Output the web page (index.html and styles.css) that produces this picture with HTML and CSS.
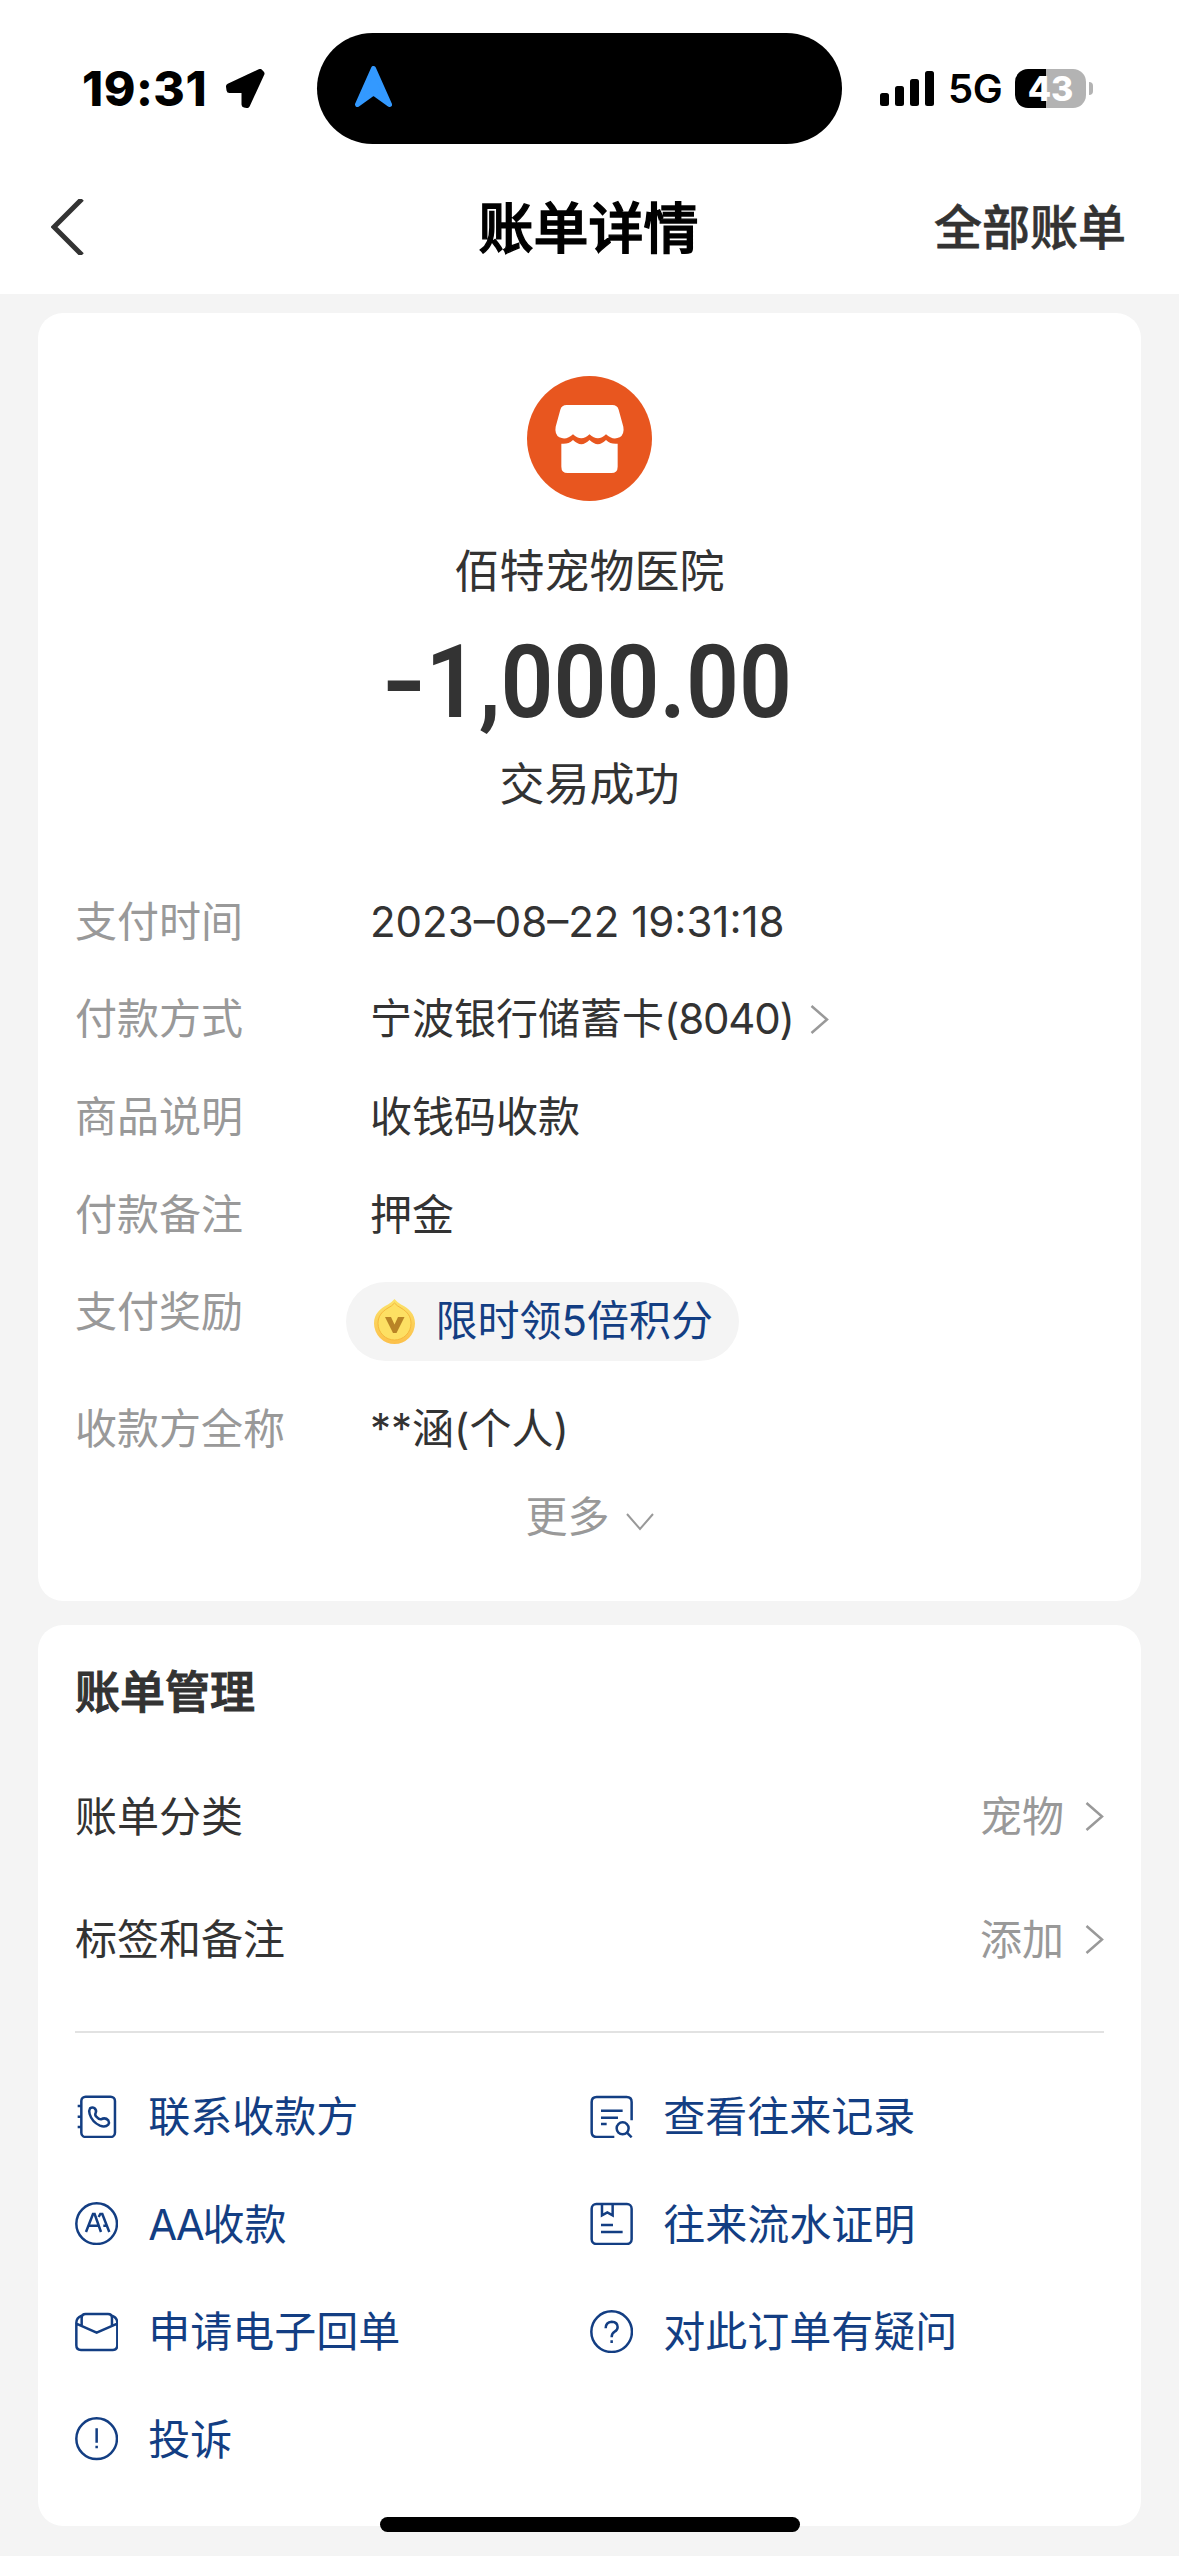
FILE: index.html
```html
<!DOCTYPE html>
<html lang="zh-CN">
<head>
<meta charset="utf-8">
<title>账单详情</title>
<link rel="stylesheet" href="styles.css">
</head>
<body>
<div class="status-bar">
  <div class="status-left">
    <span class="clock">19:31</span>
    <svg class="location" viewBox="0 0 39 39"><path d="M3 17.500 34 3 35.500 4.500 21 36 18.500 35.500V21H3.500Z" fill="#000" stroke="#000" stroke-width="6" stroke-linejoin="round"/></svg>
  </div>
  <div class="island">
    <svg class="nav-arrow" viewBox="0 0 37 41"><path d="M18.500 2.500 34.500 38.500 18.500 27 2.500 38.500Z" fill="#3399ff" stroke="#3399ff" stroke-width="5" stroke-linejoin="round"/></svg>
  </div>
  <div class="status-right">
    <svg class="signal" viewBox="0 0 54 35"><rect x="0" y="22" width="9" height="13" rx="2.500"/><rect x="15" y="15" width="9" height="20" rx="2.500"/><rect x="30" y="8" width="9" height="27" rx="2.500"/><rect x="45" y="0" width="9" height="35" rx="2.500"/></svg>
    <span class="network">5G</span>
    <div class="battery">43</div>
    <span class="battery-cap"></span>
  </div>
</div>

<header class="nav">
  <svg class="back" viewBox="0 0 33 56"><path d="M31 0 3 28 31 56" fill="none" stroke="#333" stroke-width="5"/></svg>
  <h1 class="nav-title">账单详情</h1>
  <a class="nav-link">全部账单</a>
</header>

<main class="content">
  <section class="card summary">
    <svg class="shop" viewBox="501 78 375 375">
      <circle cx="688.500" cy="265.500" r="187.500" fill="#e8561f"/>
      <path d="M620 165H757Q772 165 776 179L790 230Q794 252 779 262Q758 272 738 253Q714 277 688.500 253Q664 277 639 253Q619 272 598 262Q583 252 587 230L601 179Q605 165 620 165Z" fill="#fff"/>
      <path d="M604 281Q624 284 639 270Q664 295 688.500 270Q714 295 738 270Q753 284 773 281V350Q773 369 754 369H623Q604 369 604 350Z" fill="#fff"/>
    </svg>
    <p class="payee">佰特宠物医院</p>
    <p class="amount"><span class="sign">-</span>1,000.00</p>
    <p class="state">交易成功</p>

    <dl class="details">
      <div class="row"><dt>支付时间</dt><dd>2023–08–22 19:31:18</dd></div>
      <div class="row"><dt>付款方式</dt><dd>宁波银行储蓄卡<span class="card-tail">(8040)</span><svg class="chevron after-text" viewBox="0 0 19 29"><path d="M1.500 1 17 14.500 1.500 28"/></svg></dd></div>
      <div class="row"><dt>商品说明</dt><dd>收钱码收款</dd></div>
      <div class="row"><dt>付款备注</dt><dd>押金</dd></div>
      <div class="row reward-row"><dt>支付奖励</dt><dd class="reward">
        <svg class="coin" viewBox="0 0 41 45">
          <defs><linearGradient id="gold" x1="0" y1="0" x2="0" y2="1"><stop offset="0" stop-color="#fbe36a"/><stop offset="1" stop-color="#fcc04a"/></linearGradient></defs>
          <path d="M20.500 0Q23 3 27 5.500C35 9.500 41 15 41 24.500A20.500 20.500 0 0 1 0 24.500C0 15 6 9.500 14 5.500Q18 3 20.500 0Z" fill="url(#gold)"/>
          <path d="M20.500 4Q23 7 27 9C34 13 37 18 37 24.500A16.500 16.500 0 0 1 4 24.500C4 18 7 13 14 9Q18 7 20.500 4Z" fill="#fde063" stroke="#f5b83c" stroke-width="1"/>
          <path d="M11 18H17L20.500 25.500 24 18H30.500L22.500 34H19Z" fill="#b98426"/>
        </svg>限时领5倍积分</dd></div>
      <div class="row"><dt>收款方全称</dt><dd>**涵(个人)</dd></div>
    </dl>
    <div class="more">更多<svg class="chevron-down" viewBox="0 0 28 18"><path d="M1 1 14 16 27 1"/></svg></div>
  </section>

  <section class="card manage">
    <h2 class="manage-title">账单管理</h2>
    <div class="setting"><span>账单分类</span><span class="setting-value">宠物<svg class="chevron" viewBox="0 0 19 29"><path d="M1.500 1 17 14.500 1.500 28"/></svg></span></div>
    <div class="setting"><span>标签和备注</span><span class="setting-value">添加<svg class="chevron" viewBox="0 0 19 29"><path d="M1.500 1 17 14.500 1.500 28"/></svg></span></div>
    <hr class="divider">
    <nav class="actions">
      <a class="action"><svg class="icon" viewBox="46 75 130 130"><rect x="65" y="80" width="101" height="121" rx="13"/><path d="M54 108H65M54 140H65M54 171H65"/><path d="M91 115Q98 110 104 114Q112 121 108 129Q105 135 110 140Q118 149 124 148Q137 141 146 151Q150 158 146 164Q137 173 121 167Q97 156 90 132Q87 121 91 115Z"/></svg><span>联系收款方</span></a>
      <a class="action"><svg class="icon" viewBox="61 75 130 130"><path d="M186 151V96Q186 81 171 81H81Q66 81 66 96V186Q66 201 81 201H134M94 122H159M94 143H145M94 162H111"/><circle cx="159" cy="175" r="18"/><path d="M172 188 186 202"/></svg><span>查看往来记录</span></a>
      <a class="action"><svg class="icon" viewBox="46 399 130 130"><circle cx="111" cy="464" r="61"/><path d="M79 489 100 435H105L124 489M87 470H117M117 444 122 435H128L149 489M131 470H141"/></svg><span><span class="latin">AA</span>收款</span></a>
      <a class="action"><svg class="icon" viewBox="61 399 130 130"><rect x="66" y="405" width="120" height="120" rx="14"/><path d="M97 405V439L113 430 129 439V405M94 468H130M94 489H159"/></svg><span>往来流水证明</span></a>
      <a class="action"><svg class="icon" viewBox="46 723 130 130"><path d="M66 768V747Q66 735 78 735H145Q157 735 157 747V768M66 740Q50 746 50 762V829Q50 843 64 843H159Q173 843 173 829V762Q173 746 157 740M50 764 111 791 173 764"/></svg><span>申请电子回单</span></a>
      <a class="action"><svg class="icon" viewBox="61 723 130 130"><circle cx="126" cy="788" r="61"/><path d="M108 778Q108 759 126 758Q144 759 144 774Q144 783 135 788Q126 793 126 805M126 814V822"/></svg><span>对此订单有疑问</span></a>
      <a class="action"><svg class="icon" viewBox="46 1045 130 130"><circle cx="111" cy="1110" r="61"/><path d="M111 1079V1122M111 1131V1139"/></svg><span>投诉</span></a>
    </nav>
  </section>
</main>
<div class="home-indicator"></div>
</body>
</html>
```
FILE: styles.css
```css
* { box-sizing: border-box; margin: 0; padding: 0; }

body {
  width: 1179px;
  height: 2556px;
  overflow: hidden;
  background: #f4f4f4;
  color: #333;
  font-family: Inter, "Noto Sans CJK SC", sans-serif;
  font-size: 42px;
  line-height: 60px;
}

svg { display: block; flex: none; }

.status-bar {
  display: grid;
  grid-template-columns: 317px 525px 337px;
  height: 177px;
  padding-top: 33px;
  background: #fff;
  color: #000;
}

.status-left,
.status-right { display: flex; align-items: center; height: 111px; }

.status-left { padding-left: 82px; }
.clock { width: 144px; font-size: 48px; font-weight: 800; letter-spacing: 0.500px; }
.location { width: 39px; height: 39px; }

.island {
  display: flex;
  align-items: center;
  height: 111px;
  padding: 0 0 4px 38px;
  border-radius: 56px;
  background: #000;
}
.nav-arrow { width: 37px; height: 41px; }

.status-right { padding-left: 38px; }
.signal { width: 54px; height: 35px; }
.network { width: 67px; margin-left: 14px; padding-top: 1px; font-size: 40px; font-weight: 600; white-space: nowrap; letter-spacing: -0.500px; }
.battery {
  width: 71px;
  height: 39px;
  border-radius: 13px;
  background: linear-gradient(90deg, #000 43%, #b3b3b3 43%);
  color: #fff;
  font-size: 34px;
  font-weight: 800;
  line-height: 39px;
  text-align: center;
}
.battery-cap { width: 4px; height: 13px; margin-left: 3px; border-radius: 0 6px 6px 0; background: #b3b3b3; }

.nav {
  display: grid;
  grid-template-columns: 1fr auto 1fr;
  align-items: center;
  height: 117px;
  padding: 0 53px 17px 51px;
  background: #fff;
}
.back { width: 33px; height: 56px; }
.nav-title { padding-top: 1px; color: #000; font-size: 55px; font-weight: 500; -webkit-text-stroke: 1.400px #000; }
.nav-link { justify-self: end; padding-top: 1px; font-size: 48px; font-weight: 500; -webkit-text-stroke: 0.600px #333; }

.content { padding: 19px 38px 0; }
.card { border-radius: 25px; background: #fff; padding: 0 37px; }

.summary { height: 1288px; padding-top: 63px; text-align: center; }
.shop { width: 125px; height: 125px; margin: 0 auto; }
.payee { margin-top: 41px; font-size: 45px; }
.amount {
  height: 100px;
  margin-top: 30px;
  font-family: Roboto, sans-serif;
  font-size: 102px;
  font-weight: 600;
  line-height: 100px;
  transform: scaleX(0.91);
}
.sign { display: inline-block; margin-right: 5px; transform: scaleX(1.300); }
.state { margin-top: 23px; font-size: 45px; }

.details { margin-top: 58px; text-align: left; }
.row { display: flex; height: 97.600px; align-items: center; }
.row dt { width: 295px; color: #999; }
.row dd { display: flex; align-items: center; }
.card-tail { letter-spacing: -1.200px; }
.chevron { width: 19px; height: 29px; fill: none; stroke: #999; stroke-width: 2.500; }
.after-text { margin-left: 16px; }
.reward-row { height: 116.400px; align-items: flex-start; padding-top: 18.600px; }
.row .reward {
  height: 79px;
  margin-left: -24.500px;
  padding: 0 26px 0 28px;
  border-radius: 40px;
  background: #f4f4f4;
  color: #133e83;
}
.coin { width: 41px; height: 45px; margin-right: 21px; }
.more { display: flex; align-items: center; justify-content: center; height: 80px; color: #999; }
.chevron-down { width: 28px; height: 18px; margin: 9px 0 0 16px; fill: none; stroke: #999; stroke-width: 2; }

.manage { height: 901px; margin-top: 24px; padding-top: 28px; }
.manage-title { height: 80px; font-size: 45px; font-weight: 500; line-height: 80px; -webkit-text-stroke: 1.100px #333; }
.setting { display: flex; align-items: center; justify-content: space-between; height: 123.200px; }
.manage-title + .setting { margin-top: 22px; }
.setting-value { display: flex; align-items: center; gap: 21px; color: #999; }
.divider { height: 2px; margin-top: 30px; border: 0; background: #e2e2e2; }

.actions {
  display: grid;
  grid-template-columns: 515px 1fr;
  grid-auto-rows: 107.600px;
  margin-top: 29px;
}
.action { display: flex; align-items: center; gap: 30px; color: #133e83; }
.action > span { padding-top: 2px; }
.latin { letter-spacing: -2.200px; }
.icon { width: 43.300px; height: 43.300px; fill: none; stroke: #133e83; stroke-width: 7.500; }

.home-indicator {
  position: absolute;
  top: 2517px;
  left: 380px;
  width: 420px;
  height: 15px;
  border-radius: 8px;
  background: #000;
}
```
